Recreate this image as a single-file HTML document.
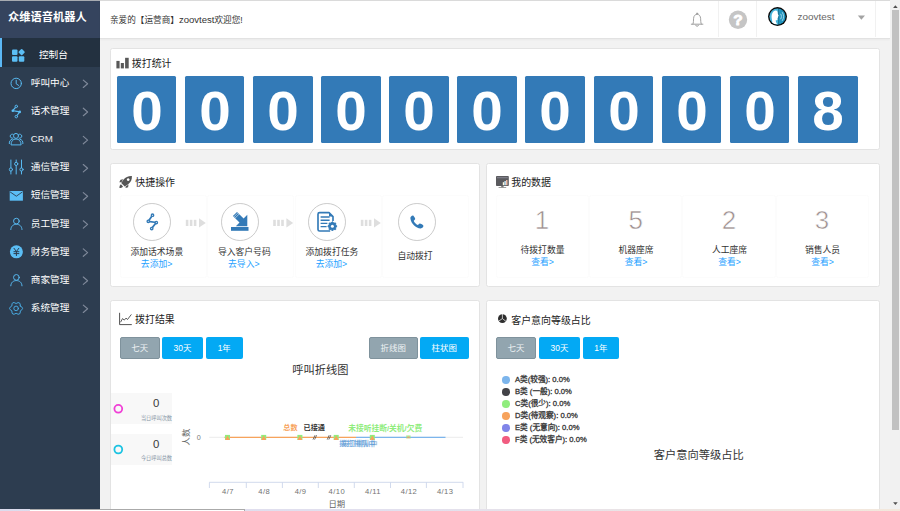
<!DOCTYPE html>
<html lang="zh-CN">
<head>
<meta charset="utf-8">
<title>zoov</title>
<style>
*{box-sizing:border-box;margin:0;padding:0}
html,body{width:900px;height:511px;overflow:hidden}
body{position:relative;background:#f2f2f2;font-family:"Liberation Sans","Noto Sans CJK SC",sans-serif;font-size:9.84px;color:#333;line-height:1}
.b{font-weight:bold}
.abs{position:absolute;white-space:nowrap}
.c{transform:translate(-50%,-50%)}
.cy{transform:translateY(-50%)}
/* sidebar */
#side{position:absolute;left:0;top:0;width:100px;height:511px;background:#2d3d50}
#logo{position:absolute;left:0;top:0;width:100px;height:38px;background:#35445e}
#logo span{position:absolute;left:8px;top:18.2px;color:#fff;font-size:11.25px}
#act{position:absolute;left:0;top:38px;width:100px;height:28.7px;background:#233140;border-left:2px solid #5bb8f5}
.mi{position:absolute;left:30.8px;color:#fff;font-size:9.65px;white-space:nowrap;transform:translateY(-50%)}
.ic{position:absolute;fill:none;stroke:#5bbef5;overflow:visible}
.chev{position:absolute;left:83px;width:5px;height:9px;fill:none;stroke:#8590a0;stroke-width:1.1;overflow:visible}
/* header */
#hdr{position:absolute;left:100px;top:0;width:790px;height:39px;background:#fff;border-bottom:1px solid #e2e2e2;box-shadow:0 1px 2px rgba(0,0,0,.04)}
#topline{position:absolute;left:0;top:0;width:900px;height:1px;background:rgba(205,205,205,.75)}
.vd{position:absolute;top:1px;width:1px;height:36px;background:#f1f1f1}
/* cards */
.card{position:absolute;background:#fff;border:1px solid #e3e3e3;border-radius:2.5px}
.ttl{position:absolute;font-size:9.95px;color:#222;white-space:nowrap;transform:translateY(-50%)}
.tile{position:absolute;top:76px;width:59.6px;height:66.6px;background:#337ab7;border-radius:1.5px}
.tile b{position:absolute;left:50.5%;top:34.7px;transform:translate(-50%,-50%) scaleX(1.03);color:#fff;font-size:55px;font-weight:bold}
.cir{position:absolute;width:37.8px;height:37.8px;border:1px solid #cbcbcb;border-radius:50%;top:202.8px}
.cap{position:absolute;font-size:8.8px;color:#333;white-space:nowrap;transform:translate(-50%,-50%)}
.lnk{position:absolute;font-size:8.8px;color:#1e9fff;white-space:nowrap;transform:translate(-50%,-50%)}
.num{position:absolute;top:220.1px;font-size:26px;color:#9d8f8f;-webkit-text-stroke:.55px #fff;transform:translate(-50%,-50%)}
.btn{position:absolute;top:337px;height:21.8px;border-radius:2px;background:#03a9f4;color:#fff;font-size:8.44px;text-align:center;line-height:22.4px;white-space:nowrap}
.btn.gr{background:#92a5af;border:1px solid #7f929c;line-height:20.4px;color:#eef2f4}
.arr{position:absolute;top:218.3px;width:20px;height:9.2px;fill:#dcdcdc}
.ax{top:491.8px;font-size:7.6px;color:#727272;letter-spacing:.45px}
.lg{font-size:7.65px;color:#333;-webkit-text-stroke:.28px #333}
.sp{position:absolute;top:194.5px;height:83.5px;border:1px solid #fcfcfc;border-radius:2.5px}
</style>
</head>
<body>
<div id="side">
  <div id="logo"><span class="b cy">众维语音机器人</span></div>
  <div id="act"></div>
  <span class="mi" style="left:39px;top:54.7px">控制台</span>
  <span class="mi" style="top:82.9px">呼叫中心</span>
  <span class="mi" style="top:111px">话术管理</span>
  <span class="mi" style="top:139.2px;font-size:9.7px;color:#eee">CRM</span>
  <span class="mi" style="top:167.3px">通信管理</span>
  <span class="mi" style="top:195.4px">短信管理</span>
  <span class="mi" style="top:223.5px">员工管理</span>
  <span class="mi" style="top:251.6px">财务管理</span>
  <span class="mi" style="top:279.8px">商家管理</span>
  <span class="mi" style="top:307.9px">系统管理</span>
  <svg class="abs" style="left:0;top:0;overflow:visible" width="100" height="511" viewBox="0 0 100 511" fill="none" stroke="#58b9f0" stroke-width="1" stroke-linecap="round" stroke-linejoin="round"><g fill="#5bbef5" stroke="none"><rect x="12" y="49.4" width="5.5" height="5.5" rx="1"/><rect x="12" y="56.3" width="5.5" height="5.5" rx="1"/><rect x="18.8" y="56.3" width="5.5" height="5.5" rx="1"/><rect x="19.2" y="49.7" width="4.9" height="4.9" rx=".9" transform="rotate(45 21.65 52.15)"/></g><circle cx="16.2" cy="83.4" r="5.2"/><path d="M16.2 80.2V83.8L18.6 85.4"/><path d="M16.3 106.5L12.7 110.7L19.7 111.9L16.3 116.5" stroke-width="1.2"/><g fill="#2d3d50" stroke-width="1"><circle cx="16.3" cy="106.4" r="1.25"/><circle cx="16.3" cy="116.6" r="1.25"/></g><g fill="#5bbef5" stroke="none"><circle cx="12.8" cy="110.7" r="1.3"/><circle cx="19.7" cy="111.9" r="1.3"/></g><g stroke-width="1"><circle cx="16" cy="135.9" r="2.5"/><path d="M11 144.5C11 141 13 139 16 139C19 139 21.1 141 21.1 144.5Z"/><path d="M12.9 138.2A2.1 2.1 0 1 1 13.2 134.3"/><path d="M19.1 138.2A2.1 2.1 0 1 0 18.8 134.3"/><path d="M9.3 143.6C9.1 141.2 10.2 139.6 12.3 139.2"/><path d="M22.9 143.6C23.1 141.2 22 139.6 19.9 139.2"/></g><g stroke-width="1"><path d="M10.9 160V167.8M10.9 171.2V174M16.2 160V162.2M16.2 165.6V174M21.5 160V167.8M21.5 171.2V174"/><circle cx="10.9" cy="169.5" r="1.6"/><circle cx="16.2" cy="163.9" r="1.6"/><circle cx="21.5" cy="169.5" r="1.6"/></g><rect x="9.7" y="191" width="13.2" height="9.7" fill="#5bbef5" stroke="none"/><path d="M10.4 192.1L16.3 196.2L22.2 192.1" stroke="#2d3d50" stroke-width=".9"/><circle cx="16.4" cy="221.1" r="2.85"/><path d="M10.8 229.5 C11.0 225.9 13.4 224.3 16.4 224.3 C19.4 224.3 21.8 225.9 22.0 229.5"/><circle cx="16.4" cy="251.8" r="6.5" fill="#5bbef5" stroke="none"/><path d="M14 248.3L16.4 251.5L18.8 248.3M16.4 251.5V255.6M13.9 251.7H18.9M13.9 253.6H18.9" stroke="#2d3d50" stroke-width="1"/><circle cx="16.4" cy="277.4" r="2.85"/><path d="M10.8 285.8 C11.0 282.2 13.4 280.6 16.4 280.6 C19.4 280.6 21.8 282.2 22.0 285.8"/><path d="M20.34 305.95Q25.00 308.40 20.34 310.85Q20.55 316.11 16.10 313.30Q11.65 316.11 11.86 310.85Q7.20 308.40 11.86 305.95Q11.65 300.69 16.10 303.50Q20.55 300.69 20.34 305.95Z" stroke-width=".95" stroke="#4aaee6"/><circle cx="16.1" cy="308.4" r="2.3" stroke-width=".95" stroke="#4aaee6"/><path d="M83.3 80.1L87.6 83.8L83.3 87.5" stroke="#7f899a" stroke-width="1.15"/><path d="M83.3 108.2L87.6 112.0L83.3 115.7" stroke="#7f899a" stroke-width="1.15"/><path d="M83.3 136.4L87.6 140.1L83.3 143.8" stroke="#7f899a" stroke-width="1.15"/><path d="M83.3 164.5L87.6 168.2L83.3 171.9" stroke="#7f899a" stroke-width="1.15"/><path d="M83.3 192.6L87.6 196.3L83.3 200.0" stroke="#7f899a" stroke-width="1.15"/><path d="M83.3 220.8L87.6 224.4L83.3 228.1" stroke="#7f899a" stroke-width="1.15"/><path d="M83.3 248.9L87.6 252.6L83.3 256.3" stroke="#7f899a" stroke-width="1.15"/><path d="M83.3 277.0L87.6 280.7L83.3 284.4" stroke="#7f899a" stroke-width="1.15"/><path d="M83.3 305.1L87.6 308.8L83.3 312.5" stroke="#7f899a" stroke-width="1.15"/></svg>
</div>
<div id="hdr">
  <span class="abs cy" style="left:10px;top:20px;font-size:8.62px;color:#333">亲爱的【运营商】<span style="font-size:9.55px">zoovtest</span>欢迎您!</span>
  <i class="vd" style="left:618px"></i><i class="vd" style="left:656px"></i><i class="vd" style="left:774.5px"></i>
  <!--HDRICONS-->
  <span class="abs cy" style="left:697.6px;top:17.2px;font-size:9.95px;color:#666">zoovtest</span>
</div>
<div id="topline"></div>

<!-- card 1 -->
<div class="card" style="left:110px;top:48px;width:770px;height:102px"></div>
<span class="ttl" style="left:131.8px;top:64.3px">拨打统计</span>
<div class="tile" style="left:116.8px"><b>0</b></div>
<div class="tile" style="left:184.9px"><b>0</b></div>
<div class="tile" style="left:253px"><b>0</b></div>
<div class="tile" style="left:321.1px"><b>0</b></div>
<div class="tile" style="left:389.2px"><b>0</b></div>
<div class="tile" style="left:457.3px"><b>0</b></div>
<div class="tile" style="left:525.4px"><b>0</b></div>
<div class="tile" style="left:593.5px"><b>0</b></div>
<div class="tile" style="left:661.6px"><b>0</b></div>
<div class="tile" style="left:729.8px"><b>0</b></div>
<div class="tile" style="left:798px"><b>8</b></div>

<!-- card 2 -->
<div class="card" style="left:110px;top:163px;width:370px;height:124px"></div>
<div class="sp" style="left:119.5px;width:87.7px"></div><div class="sp" style="left:207.2px;width:87.3px"></div><div class="sp" style="left:294.5px;width:87.3px"></div><div class="sp" style="left:381.8px;width:87.7px"></div>
<span class="ttl" style="left:135.3px;top:182.8px">快捷操作</span>
<div class="cir" style="left:133.1px"></div>
<div class="cir" style="left:220.8px"></div>
<div class="cir" style="left:308.1px"></div>
<div class="cir" style="left:398.1px"></div>
<span class="cap" style="left:156.8px;top:251.8px">添加话术场景</span>
<span class="lnk" style="left:156.6px;top:264.3px">去添加&gt;</span>
<span class="cap" style="left:244.3px;top:251.8px">导入客户号码</span>
<span class="lnk" style="left:243.8px;top:264.3px">去导入&gt;</span>
<span class="cap" style="left:331.9px;top:251.8px">添加拨打任务</span>
<span class="lnk" style="left:331.4px;top:264.3px">去添加&gt;</span>
<span class="cap" style="left:415px;top:256.2px">自动拨打</span>

<!-- card 3 -->
<div class="card" style="left:486px;top:163px;width:394px;height:124px"></div>
<div class="sp" style="left:496.0px;width:93.0px"></div><div class="sp" style="left:589.0px;width:93.3px"></div><div class="sp" style="left:682.3px;width:93.4px"></div><div class="sp" style="left:775.7px;width:93.5px"></div>
<span class="ttl" style="left:511.2px;top:182.8px">我的数据</span>
<span class="num" style="left:542px">1</span>
<span class="num" style="left:635.8px">5</span>
<span class="num" style="left:729px">2</span>
<span class="num" style="left:822px">3</span>
<span class="cap" style="left:542.5px;top:249.6px">待拨打数量</span>
<span class="lnk" style="left:542.5px;top:262px">查看&gt;</span>
<span class="cap" style="left:636px;top:249.6px">机器座席</span>
<span class="lnk" style="left:636px;top:262px">查看&gt;</span>
<span class="cap" style="left:729.5px;top:249.6px">人工座席</span>
<span class="lnk" style="left:729.5px;top:262px">查看&gt;</span>
<span class="cap" style="left:822.5px;top:249.6px">销售人员</span>
<span class="lnk" style="left:822.5px;top:262px">查看&gt;</span>

<!-- card 4 -->
<div class="card" style="left:110px;top:300px;width:370px;height:230px"></div>
<span class="ttl" style="left:135px;top:320.2px">拨打结果</span>
<div class="btn gr" style="left:119.7px;width:40.1px">七天</div>
<div class="btn" style="left:162.1px;width:40.8px">30天</div>
<div class="btn" style="left:206px;width:36.5px">1年</div>
<div class="btn gr" style="left:369px;width:48.5px">折线图</div>
<div class="btn" style="left:420px;width:48.5px">柱状图</div>
<span class="abs c" style="left:320.4px;top:370.6px;font-size:11.25px;color:#333">呼叫折线图</span>

<div class="abs" style="left:110.5px;top:393px;width:61.5px;height:30.8px;background:#f8f8f8"></div>
<div class="abs" style="left:110.5px;top:433.8px;width:61.5px;height:31px;background:#f8f8f8"></div>
<svg class="abs" style="left:0;top:0;overflow:visible" width="200" height="511"><circle cx="118.3" cy="408.8" r="3.9" fill="none" stroke="#f03fd6" stroke-width="1.8"/><circle cx="118.3" cy="449.5" r="3.9" fill="none" stroke="#1cc3e2" stroke-width="1.8"/></svg>
<span class="abs c" style="left:156.2px;top:404px;font-size:11.4px;color:#3a3a3a">0</span>
<span class="abs c" style="left:156.2px;top:444.6px;font-size:11.4px;color:#3a3a3a">0</span>
<span class="abs c" style="left:156.5px;top:418.6px;font-size:5.2px;color:#8796a6">当日呼叫次数</span>
<span class="abs c" style="left:156.5px;top:459.1px;font-size:5.2px;color:#8796a6">今日呼叫总数</span>
<span class="abs" style="left:186px;top:437px;font-size:8.4px;color:#666;transform:translate(-50%,-50%) rotate(-90deg)">人数</span>
<span class="abs c" style="left:198.8px;top:437.6px;font-size:7.2px;color:#7a7a7a">0</span>
<svg class="abs" style="left:0;top:0;overflow:visible" width="900" height="511" viewBox="0 0 900 511">
<path d="M209.3 437.3H463" stroke="#e6e6e6" stroke-width=".8"/>
<path d="M224.5 437.3H356" stroke="#f7a35c" stroke-width="1.3"/>
<path d="M356 437.3H445.5" stroke="#7cb5ec" stroke-width="1.3"/>
<g id="mk"><rect x="225" y="434.9" width="5" height="5" fill="#90ed7d"/><path d="M225 439.9L227.5 435.6L230 439.9Z" fill="#f7a35c"/></g>
<g><rect x="261.2" y="434.9" width="5" height="5" fill="#90ed7d"/><path d="M261.2 439.9L263.7 435.6L266.2 439.9Z" fill="#f7a35c"/></g>
<g><rect x="297.4" y="434.9" width="5" height="5" fill="#90ed7d"/><path d="M297.4 439.9L299.9 435.6L302.4 439.9Z" fill="#f7a35c"/></g>
<g><rect x="333.7" y="434.9" width="5" height="5" fill="#90ed7d"/><path d="M333.7 439.9L336.2 435.6L338.7 439.9Z" fill="#f7a35c"/></g>
<g><rect x="369.8" y="434.9" width="5" height="5" fill="#90ed7d"/><path d="M369.8 439.9L372.3 435.6L374.8 439.9Z" fill="#f7a35c"/></g>
<g opacity=".75"><rect x="406.2" y="435.4" width="4.4" height="3" fill="#90ed7d"/><path d="M406.2 438.2L408.4 435.8L410.6 438.2Z" fill="#f7a35c"/></g>
<path d="M313 439.6L315 435.2M314.6 439.6L316.6 435.2M327.2 439.6L329.2 435.2M328.8 439.6L330.8 435.2" stroke="#444" stroke-width=".75"/>
<path d="M209.3 482.3H463.2" stroke="#ccd6eb" stroke-width=".9"/>
<path d="M209.4 482.3V488M246.3 482.3V488M282.4 482.3V488M318.3 482.3V488M354.3 482.3V488M390.5 482.3V488M426.4 482.3V488M463 482.3V488" stroke="#ccd6eb" stroke-width=".9"/>
</svg>
<span class="abs c b" style="left:290.4px;top:428.8px;font-size:7.1px;color:#f7a35c">总数</span>
<span class="abs c b" style="left:314.2px;top:428.8px;font-size:7.1px;color:#333">已接通</span>
<span class="abs c b" style="left:385.2px;top:428.8px;font-size:7.75px;color:#90ed7d">未接听挂断/关机/欠费</span>
<span class="abs c b" style="left:357.4px;top:444.3px;font-size:7.3px;color:#7cb5ec">拨打排队中</span>
<span class="abs c b" style="left:359.4px;top:443.9px;font-size:7.3px;color:#5b8fc4;opacity:.55">拨打排队中</span>
<span class="abs c ax" style="left:228px">4/7</span><span class="abs c ax" style="left:264.2px">4/8</span><span class="abs c ax" style="left:300.6px">4/9</span><span class="abs c ax" style="left:336.8px">4/10</span><span class="abs c ax" style="left:373px">4/11</span><span class="abs c ax" style="left:409px">4/12</span><span class="abs c ax" style="left:445.2px">4/13</span>
<span class="abs c" style="left:336.8px;top:504.3px;font-size:8.4px;color:#666">日期</span>


<!-- card 5 -->
<div class="card" style="left:486px;top:300px;width:394px;height:230px"></div>
<span class="ttl" style="left:511.2px;top:320.6px">客户意向等级占比</span>
<div class="btn gr" style="left:496.3px;width:39.3px">七天</div>
<div class="btn" style="left:539px;width:41px">30天</div>
<div class="btn" style="left:583px;width:35.6px">1年</div>
<div class="abs" style="left:502.3px;top:376.4px;width:7.5px;height:7.5px;border-radius:50%;background:#7cb5ec"></div><span class="abs cy lg" style="left:515px;top:380.3px">A类(较强): 0.0%</span>
<div class="abs" style="left:502.3px;top:388.4px;width:7.5px;height:7.5px;border-radius:50%;background:#434348"></div><span class="abs cy lg" style="left:515px;top:392.3px">B类 (一般): 0.0%</span>
<div class="abs" style="left:502.3px;top:400.2px;width:7.5px;height:7.5px;border-radius:50%;background:#90ed7d"></div><span class="abs cy lg" style="left:515px;top:404.1px">C类(很少): 0.0%</span>
<div class="abs" style="left:502.3px;top:412.2px;width:7.5px;height:7.5px;border-radius:50%;background:#f7a35c"></div><span class="abs cy lg" style="left:515px;top:416.1px">D类(待观察): 0.0%</span>
<div class="abs" style="left:502.3px;top:424.1px;width:7.5px;height:7.5px;border-radius:50%;background:#8085e9"></div><span class="abs cy lg" style="left:515px;top:428.0px">E类 (无意向): 0.0%</span>
<div class="abs" style="left:502.3px;top:436.1px;width:7.5px;height:7.5px;border-radius:50%;background:#f15c80"></div><span class="abs cy lg" style="left:515px;top:439.9px">F类 (无效客户): 0.0%</span>

<span class="abs c" style="left:698.7px;top:455.5px;font-size:11.25px;color:#333">客户意向等级占比</span>

<svg class="abs" style="left:0;top:0;overflow:visible" width="900" height="511" viewBox="0 0 900 511"><g fill="none" stroke="#9b9b9b" stroke-width=".95" stroke-linecap="round" stroke-linejoin="round"><path d="M691.3 24.2H702.9M692.9 24.1C693.6 22.8 693.4 20.5 693.6 18.3C693.8 15.8 695.2 14.3 697.1 14.3C699 14.3 700.4 15.8 700.6 18.3C700.8 20.5 700.6 22.8 701.3 24.1"/><path d="M695.6 25.2A1.6 1.6 0 0 0 698.6 25.2"/><circle cx="697.1" cy="13.5" r=".6"/></g><circle cx="738" cy="19.7" r="9.2" fill="#c5c5c5"/><text x="738" y="25.2" text-anchor="middle" font-family="Liberation Sans, sans-serif" font-weight="bold" font-size="15.5" fill="#fff" stroke="#fff" stroke-width=".9" stroke-linejoin="round">?</text><defs><clipPath id="avc"><circle cx="777.5" cy="16.6" r="8.1"/></clipPath></defs><circle cx="777.5" cy="16.6" r="9.5" fill="#0a0a0a"/><g clip-path="url(#avc)"><rect x="768" y="7" width="10.5" height="20" fill="#45b4da"/><rect x="778.5" y="7" width="10" height="20" fill="#1f93bd"/><path d="M772.2 25.5C772.6 22.5 771.6 21 771.4 18.2C771.1 13.8 773.2 10.8 776 10.5C778.2 10.4 778.8 12.4 778.6 14L779.8 16.6L778.9 17.1L778.8 18.4L778.2 18.7L778.3 20.2C778 21.2 776.9 21.1 776.2 21.1C776.2 22.8 777 24 778 25.5Z" fill="#fff" transform="translate(775.2 17) scale(.85 .93) translate(-775.6 -17.6)"/><path d="M780.6 13.8C781.6 15.4 781.6 17.6 780.6 19.2M782.2 12.2C784 14.8 784 18.2 782.2 20.8" fill="none" stroke="#d5eef7" stroke-width=".75"/></g><path d="M857.8 15.6H865L861.4 19.8Z" fill="#a3a3a3"/><g fill="#585858"><rect x="116.4" y="60.9" width="3.2" height="7.5"/><rect x="120.8" y="63" width="3.1" height="5.4"/><rect x="125.1" y="57.8" width="3.6" height="10.6"/></g><g fill="#555"><path d="M131.9 175.9C128.6 175.7 125.6 176.9 123.6 179.6L121.2 183.1L124.7 186.6L128.2 184.2C130.9 182.2 132.1 179.2 131.9 175.9ZM128.2 178.2A1.4 1.4 0 1 1 128.19 178.2Z" fill-rule="evenodd"/><path d="M123.2 179.3L120.6 179.7L119.3 182.2L121.4 182.2ZM128.5 184.6L128.1 187.2L125.6 188L125.6 186.4Z"/><path d="M120.9 184.3C119.8 185 119.5 186.6 119.4 187.9C120.7 187.8 122.3 187.5 123 186.4Z"/></g><rect x="496" y="176" width="12.8" height="10" rx=".8" fill="#5a5a5e"/><rect x="501.2" y="186" width="2.4" height="1.3" fill="#777"/><rect x="498.6" y="187.2" width="7.6" height=".8" fill="#888"/><rect x="497" y="177" width="10.8" height="1.3" fill="#7c7c86"/><rect x="502.8" y="182.2" width="1.5" height="3" fill="#fffbe0"/><rect x="504.4" y="181" width="1.5" height="4.2" fill="#bfe3f7"/><rect x="506" y="180" width="1.5" height="5.2" fill="#f0b9a2"/><g fill="none" stroke="#333" stroke-width=".85"><path d="M119.6 312.8V324.6H131.8"/><path d="M120.6 322.2L122.5 318.6L124.3 320.1L126 318.1L127.5 319.5L131.4 314.4" stroke-width=".8"/></g><circle cx="502.4" cy="318.6" r="4.4" fill="#2e2e2e"/><path d="M502.4 314V318.6L498.6 321.2M502.4 318.6L506 321.4" stroke="#fff" stroke-width=".7" fill="none"/><g fill="#dedede"><rect x="185.8" y="219.8" width="2.6" height="6.2"/><rect x="189.8" y="219.8" width="2.6" height="6.2"/><rect x="193.8" y="219.8" width="2.6" height="6.2"/><path d="M199.0 218.3L205.8 222.9L199.0 227.5Z"/></g><g fill="#dedede"><rect x="273.2" y="219.8" width="2.6" height="6.2"/><rect x="277.2" y="219.8" width="2.6" height="6.2"/><rect x="281.2" y="219.8" width="2.6" height="6.2"/><path d="M286.4 218.3L293.2 222.9L286.4 227.5Z"/></g><g fill="#dedede"><rect x="360.8" y="219.8" width="2.6" height="6.2"/><rect x="364.8" y="219.8" width="2.6" height="6.2"/><rect x="368.8" y="219.8" width="2.6" height="6.2"/><path d="M374.0 218.3L380.8 222.9L374.0 227.5Z"/></g><g stroke="#337ab7" fill="#fff" stroke-width="1.75" stroke-linecap="round" stroke-linejoin="round"><path d="M152.5 215.3L148.3 221.3L156.3 222.5L151.7 228.4" fill="none"/><circle cx="152.5" cy="215.2" r="1.2" stroke-width="1.35"/><circle cx="148.3" cy="221.3" r="1.2" stroke-width="1.35"/><circle cx="156.3" cy="222.5" r="1.2" stroke-width="1.35"/><circle cx="151.7" cy="228.5" r="1.2" stroke-width="1.35"/></g><g fill="#337ab7"><rect x="231" y="227" width="17.5" height="3.8"/><path d="M247.3 214.8V226.3H235.8L239.5 222.6L232.9 216L237 211.9L243.6 218.5Z"/></g><path d="M233.8 217L238 212.8M235 218.2L239.2 214" stroke="#fff" stroke-width=".55"/><g fill="none" stroke="#337ab7" stroke-width="1.65" stroke-linejoin="round"><path d="M330.2 231H319.6A1.6 1.6 0 0 1 318 229.4V214.2A1.6 1.6 0 0 1 319.6 212.6H329L333 216.6V221"/><path d="M320.6 217H329.6M320.6 220.2H329.6M320.6 223.4H327.4M320.6 226.6H326.6" stroke-width="1.4"/></g><path d="M329 212.6V216.6H333Z" fill="#337ab7"/><path d="M337.10 226.30L335.63 227.64L335.72 229.62L333.74 229.53L332.40 231.00L331.06 229.53L329.08 229.62L329.17 227.64L327.70 226.30L329.17 224.96L329.08 222.98L331.06 223.07L332.40 221.60L333.74 223.07L335.72 222.98L335.63 224.96Z" fill="#337ab7" stroke="#337ab7" stroke-width=".9" stroke-linejoin="round"/><circle cx="332.4" cy="226.3" r="1.5" fill="#fff"/><g fill="#337ab7"><path d="M412.9 215.4C411.6 215.4 410.2 216.8 410.4 218.4C411 223.4 415.8 228.2 420.6 228.4C422.2 228.5 423.5 227 423.4 225.8C423.3 225 420.6 223.6 419.8 223.6C419 223.6 418.6 224.9 417.9 224.9C416.6 224.9 413.8 222 413.8 220.8C413.8 220.1 415.2 219.6 415.2 218.9C415.2 218.1 413.7 215.4 412.9 215.4Z"/></g></svg>
<!-- scrollbars -->
<div class="abs" style="left:889.8px;top:0;width:10.2px;height:511px;background:#f1f1f1"></div>
<div class="abs" style="left:891.6px;top:10.4px;width:7px;height:420px;background:#c1c1c1"></div>
<svg class="abs" style="left:891.5px;top:3.5px" width="7" height="5" viewBox="0 0 7 5"><path d="M1.1 3.9 L3.4 1.3 L5.7 3.9Z" fill="#505050"/></svg>
<svg class="abs" style="left:891.5px;top:501px" width="7" height="5" viewBox="0 0 7 5"><path d="M1.1 1.3 L3.4 3.9 L5.7 1.3Z" fill="#505050"/></svg>
<div class="abs" style="left:0;top:509px;width:900px;height:2px;background:linear-gradient(90deg,#dcdcee 0,#e2e0ee 45%,#f3e8dc 100%)"></div>
<div class="abs" style="left:30px;top:509px;width:215px;height:2px;background:#fff;border-top:1px solid #aaa;border-right:1px solid #aaa"></div>
</body>
</html>
